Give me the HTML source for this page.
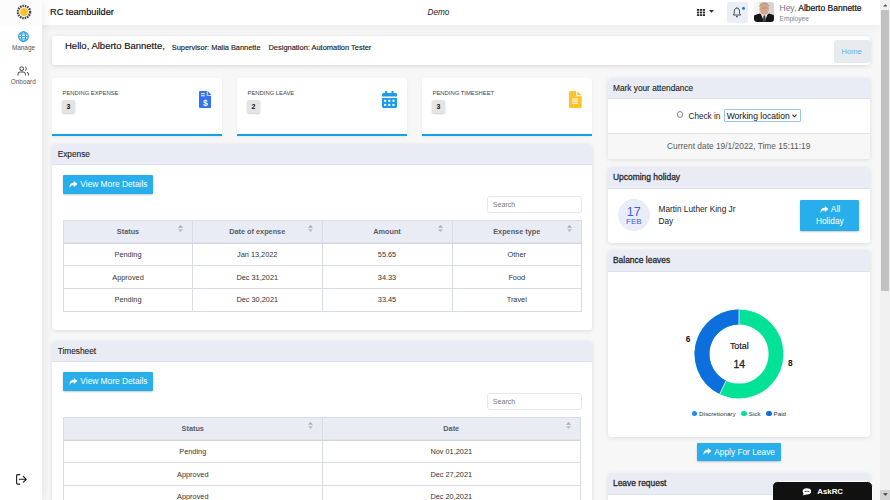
<!DOCTYPE html>
<html>
<head>
<meta charset="utf-8">
<title>RC teambuilder</title>
<style>
*{box-sizing:border-box;margin:0;padding:0}
html,body{width:890px;height:500px;overflow:hidden;background:#f7f7f8;font-family:"Liberation Sans",sans-serif;color:#212529}
.abs{position:absolute}
#app{position:relative;width:890px;height:500px;overflow:hidden;background:#f7f7f8}
.t{position:absolute;white-space:nowrap;line-height:1}
#topbar{left:0;top:0;width:880px;height:24.5px;background:#fff;box-shadow:0 2px 9px rgba(0,0,0,.055)}
#sidebar{left:0;top:0;width:42px;height:500px;background:#fff;box-shadow:2px 0 9px rgba(0,0,0,.07)}
.card{position:absolute;background:#fff;border-radius:3px;box-shadow:0 1px 4px rgba(0,0,0,.11)}
.hdr{position:absolute;left:0;top:0;right:0;height:21.3px;background:#e9ecf5;border-radius:3px 3px 0 0;border-bottom:1px solid #dfe2ec}
.hdr span{position:absolute;left:5.3px;top:4.9px;font-size:8.3px;line-height:10px;color:#222;-webkit-text-stroke:.12px #222}
.hdr.b{height:21.7px}
.hdr span.b{font-size:8.45px;top:5px;-webkit-text-stroke:.27px #26262a;color:#26262a}
.btn{position:absolute;background:#28aeea;color:#fff;border-radius:1px;box-shadow:0 1px 2px rgba(0,0,0,.22);font-size:8.35px;text-align:center;white-space:nowrap}
.btn svg{vertical-align:-0.8px;margin-right:1px}
.stat{position:absolute;top:78px;width:170px;height:58px;background:#fff;border-radius:3px 3px 0 0;border-bottom:2px solid #14a1e8;box-shadow:0 1px 3px rgba(0,0,0,.07)}
.stat .lab{position:absolute;left:10.2px;top:11.8px;font-size:5.85px;line-height:7px;color:#444;white-space:nowrap}
.stat .num{position:absolute;left:9.8px;top:22.3px;width:12.5px;height:13px;background:#e4e4e6;border-radius:2px;font-size:7px;font-weight:bold;line-height:13px;text-align:center;color:#111;box-shadow:0 1px 2px rgba(0,0,0,.2)}
table{position:absolute;border-collapse:collapse;table-layout:fixed;font-size:7.35px;color:#333}
td,th{border:1px solid #d9dce7;text-align:center;vertical-align:middle;height:22.7px;padding:0;font-weight:normal;position:relative}
th{background:#e9ecf5;font-weight:bold;color:#595b66;font-size:7.3px;padding:0 0 .6px 0;border-bottom-color:#d0d4de;box-shadow:inset 0 -1px 0 #e1e4ec}
.sort{position:absolute;right:9px;top:3.9px;width:5px;height:7px}
.search{position:absolute;width:94.5px;height:16.5px;border:1px solid #e7e7e9;border-radius:3px;background:#fff;font-size:7.1px;color:#777;line-height:17px;padding-left:4.6px;overflow:hidden}
</style>
</head>
<body>
<div id="app">

<!-- TOP BAR / SIDEBAR -->
<div id="topbar" class="abs"></div>
<div id="sidebar" class="abs"></div>
<div class="abs" style="left:0;top:0;width:42px;height:24.5px;background:#fcfcfc"></div>

<!-- logo -->
<svg class="abs" style="left:15.6px;top:4.2px" width="16" height="16" viewBox="0 0 16 16">
 <circle cx="8" cy="8" r="6.1" fill="none" stroke="#444" stroke-width="2.4" stroke-dasharray="1.5 0.9"/>
 <circle cx="8" cy="8" r="3.9" fill="#fcc02c"/>
</svg>
<div class="t" style="left:50px;top:7.7px;font-size:9.2px;color:#111;-webkit-text-stroke:.2px #111">RC teambuilder</div>
<div class="t" style="left:427.5px;top:8.6px;font-size:8.2px;font-style:italic;color:#222">Demo</div>

<!-- grid icon -->
<svg class="abs" style="left:696.7px;top:9px" width="8" height="7" viewBox="0 0 8 7" fill="#2b2b2b">
 <rect x="0" y="0" width="2.2" height="1.8"/><rect x="2.9" y="0" width="2.2" height="1.8"/><rect x="5.8" y="0" width="2.2" height="1.8"/>
 <rect x="0" y="2.6" width="2.2" height="1.8"/><rect x="2.9" y="2.6" width="2.2" height="1.8"/><rect x="5.8" y="2.6" width="2.2" height="1.8"/>
 <rect x="0" y="5.2" width="2.2" height="1.8"/><rect x="2.9" y="5.2" width="2.2" height="1.8"/><rect x="5.8" y="5.2" width="2.2" height="1.8"/>
</svg>
<svg class="abs" style="left:709px;top:10.3px" width="5" height="3" viewBox="0 0 5 3"><path d="M0 0h5L2.500 2.800z" fill="#2b2b2b"/></svg>
<!-- bell -->
<div class="abs" style="left:727.1px;top:2px;width:20.6px;height:20.6px;background:#ebeef9;border-radius:2px"></div>
<svg class="abs" style="left:731px;top:6px" width="14" height="13" viewBox="0 0 14 13">
 <path d="M5.900 2.100c-1.700 0-2.600 1.300-2.600 3v2.300L2.200 9h7.400L8.500 7.400V5.100c0-1.700-.9-3-2.600-3z" fill="none" stroke="#3a3a3a" stroke-width=".9" stroke-linejoin="round"/>
 <path d="M5.900 1.300v.8M5 10.300h1.800" stroke="#3a3a3a" stroke-width=".9" fill="none"/>
 <path d="M5 10.400a.9.900 0 0 0 1.800 0z" fill="#3a3a3a"/>
 <circle cx="12.500" cy="2.400" r="1.400" fill="#1a6bf0"/>
</svg>
<!-- avatar -->
<svg class="abs" style="left:753.8px;top:2px;border-radius:3px" width="20.500" height="20" viewBox="0 0 20.500 20">
 <defs><filter id="bl" x="-20%" y="-20%" width="140%" height="140%"><feGaussianBlur stdDeviation=".55"/></filter>
 <clipPath id="cp"><rect width="20.500" height="20" rx="2.500"/></clipPath></defs>
 <g clip-path="url(#cp)"><rect width="20.500" height="20" fill="#e4e3e1"/>
 <g filter="url(#bl)">
  <rect x="-1" y="-1" width="6" height="14" fill="#f4f4f4"/>
  <rect x="15" y="-1" width="7" height="14" fill="#d6d5d3"/>
  <ellipse cx="10.300" cy="7.200" rx="4.600" ry="5.600" fill="#d7a58c"/>
  <path d="M5.300 5.500C5.300 1.500 8 .2 10.400.2c2.600 0 5 1.400 5 5.300-1.200-2-2.400-2.500-5-2.500s-3.900.6-5.100 2.500z" fill="#b3a48c"/>
  <path d="M-1 21V15.500c0-2 3-3 6.500-4L10.300 14l4.700-2.500c3.500 1 6.500 2 6.500 4V21z" fill="#19191b"/>
  <path d="M6.800 11.800l3.500 8.500 3.500-8.500-3.500 1.500z" fill="#ececee"/>
  <path d="M9.500 13.500h1.700l.8 7h-3.300z" fill="#3c3c40"/>
  <ellipse cx="10.300" cy="6" rx="3.300" ry="1" fill="#c08e78" opacity=".6"/>
 </g></g>
</svg>
<div class="t" style="left:779.5px;top:4px;font-size:8.5px;color:#74748f">Hey, <span style="color:#111;-webkit-text-stroke:.22px #111">Alberto Bannette</span></div>
<div class="t" style="left:779.5px;top:15.500px;font-size:6.6px;color:#7e7e98">Employee</div>

<!-- SIDEBAR ITEMS -->
<svg class="abs" style="left:18.100px;top:31px" width="11" height="11" viewBox="0 0 11 11" fill="none" stroke="#1ea3ee" stroke-width="1.150">
 <circle cx="5.500" cy="5.500" r="4.800"/><ellipse cx="5.500" cy="5.500" rx="2" ry="4.800"/><path d="M.7 5.500h9.600M1.500 3h8M1.500 8h8" stroke-width=".9"/>
</svg>
<div class="t" style="left:0;top:45.200px;width:47px;text-align:center;font-size:6.400px;color:#555">Manage</div>
<svg class="abs" style="left:17px;top:65.900px" width="12.500" height="10" viewBox="0 0 12.500 10" fill="none" stroke="#3a3a3a" stroke-width=".950">
 <circle cx="4.700" cy="2.700" r="1.900"/><path d="M1 9.500V8.200A2.200 2.200 0 0 1 3.200 6h3a2.200 2.200 0 0 1 2.200 2.200v1.300"/>
 <path d="M8.200 1a1.900 1.900 0 0 1 0 3.500M10 6.200a2.200 2.200 0 0 1 1.500 2v1.300"/>
</svg>
<div class="t" style="left:0;top:79.200px;width:46.500px;text-align:center;font-size:6.400px;color:#555">Onboard</div>
<svg class="abs" style="left:15px;top:473px" width="13" height="13" viewBox="0 0 13 13" fill="none" stroke="#1a1a1a" stroke-width="1.1" stroke-linecap="round" stroke-linejoin="round">
 <path d="M4.800 1.600H2.600a1 1 0 0 0-1 1v7.500a1 1 0 0 0 1 1h2.200"/><path d="M4.300 6.300h6.800M8.300 3.400l3 2.900-3 2.900"/>
</svg>

<!-- BREADCRUMB CARD -->
<div class="card" style="left:52.400px;top:36.200px;width:817.600px;height:28.800px;box-shadow:0 1px 5px rgba(0,0,0,.13)"></div>
<div class="t" style="left:65px;top:40.600px;font-size:9.500px;color:#111;-webkit-text-stroke:.15px #111">Hello, Alberto Bannette,</div>
<div class="t" style="left:171.800px;top:43.600px;font-size:7.400px;color:#222;-webkit-text-stroke:.15px #222">Supervisor: Malia Bannette</div>
<div class="t" style="left:268.500px;top:43.600px;font-size:7.450px;color:#222;-webkit-text-stroke:.15px #222">Designation: Automation Tester</div>
<div class="abs" style="left:833.600px;top:39.900px;width:36.200px;height:22.900px;background:#e8ebee;border-radius:2.500px"></div>
<div class="t" style="left:833.600px;top:47.900px;width:36.200px;text-align:center;font-size:7.600px;color:#55b2ee">Home</div>

<!-- STAT CARDS -->
<div class="stat" style="left:52.400px;width:169.800px"><div class="lab">PENDING EXPENSE</div><div class="num">3</div>
 <svg class="abs" style="left:146.600px;top:13px" width="12.500" height="17" viewBox="0 0 12.500 17"><path d="M0 1.200A1.200 1.200 0 0 1 1.200 0H7.800v4.700h4.700v11.100a1.200 1.200 0 0 1-1.200 1.200H1.200A1.200 1.200 0 0 1 0 15.800z" fill="#3370f4"/><path d="M8.600 0l3.900 3.900H8.600z" fill="#3370f4"/><text x="6.300" y="14.800" font-size="8.500" font-weight="bold" text-anchor="middle" fill="#fff" font-family="Liberation Sans">$</text><rect x="2" y="2.200" width="3.800" height="1" fill="#fff"/><rect x="2" y="4.300" width="3.800" height="1" fill="#fff"/></svg>
</div>
<div class="stat" style="left:237.400px;width:169.800px"><div class="lab">PENDING LEAVE</div><div class="num">2</div>
 <svg class="abs" style="left:144.600px;top:13px" width="15" height="17" viewBox="0 0 15 17"><path d="M0 3.500A1.500 1.500 0 0 1 1.500 2H3V.6a.6.600 0 0 1 .6-.6h1a.6.600 0 0 1 .6.600V2h4.200V.6a.6.600 0 0 1 .6-.6h1a.6.600 0 0 1 .6.600V2h1.500A1.500 1.500 0 0 1 15 3.500V5.600H0z" fill="#1c9bee"/><path d="M0 7h15v8.500a1.400 1.400 0 0 1-1.400 1.400H1.400A1.400 1.400 0 0 1 0 15.500z" fill="#1c9bee"/><g fill="#fff"><rect x="2.100" y="8.800" width="2.100" height="2"/><rect x="6.200" y="8.800" width="2.100" height="2"/><rect x="10.400" y="8.800" width="2.100" height="2"/><rect x="2.100" y="12.900" width="2.100" height="2"/><rect x="6.200" y="12.900" width="2.100" height="2"/><rect x="10.400" y="12.900" width="2.100" height="2"/></g></svg>
</div>
<div class="stat" style="left:422.400px;width:169.800px"><div class="lab">PENDING TIMESHEET</div><div class="num">3</div>
 <svg class="abs" style="left:146.800px;top:13px" width="13" height="17" viewBox="0 0 13 17"><path d="M0 1.200A1.200 1.200 0 0 1 1.200 0H7.200v5.200H12.700v10.600a1.200 1.200 0 0 1-1.200 1.200H1.200A1.200 1.200 0 0 1 0 15.800z" fill="#fbc42f"/><path d="M8.300 .2L12.700 4.300H8.300z" fill="#fbc42f"/><g fill="#fff"><rect x="3" y="7.500" width="6" height="1"/><rect x="3" y="9.600" width="6" height="1"/><rect x="3" y="11.700" width="6" height="1"/></g></svg>
</div>

<!-- EXPENSE PANEL -->
<div class="card" style="left:52.400px;top:144.300px;width:539.800px;height:186px"><div class="hdr" style="height:20.5px"><span style="top:4.6px">Expense</span></div></div>
<div class="btn" style="left:63px;top:175px;width:90px;height:19px;line-height:18.600px"><svg width="8.500" height="7" viewBox="0 0 8.500 7"><path d="M4.800 0L8.500 3 4.800 6V4.200C2.600 4.200 1.500 4.900.6 6.900.3 3.600 1.800 1.900 4.800 1.800z" fill="#fff"/></svg> View More Details</div>
<div class="search" style="left:487.200px;top:196.100px">Search</div>
<table style="left:63px;top:220px;width:518px">
<colgroup><col style="width:129px"><col style="width:129.5px"><col style="width:130px"><col style="width:129.5px"></colgroup>
<tr><th>Status<svg class="sort" viewBox="0 0 5 7"><path d="M2.500 0L5 2.800H0z" fill="#a9abb3"/><path d="M2.500 7L5 4.200H0z" fill="#b9bbc3"/></svg></th><th>Date of expense<svg class="sort" viewBox="0 0 5 7"><path d="M2.500 0L5 2.800H0z" fill="#a9abb3"/><path d="M2.500 7L5 4.200H0z" fill="#b9bbc3"/></svg></th><th>Amount<svg class="sort" viewBox="0 0 5 7"><path d="M2.500 0L5 2.800H0z" fill="#a9abb3"/><path d="M2.500 7L5 4.200H0z" fill="#b9bbc3"/></svg></th><th>Expense type<svg class="sort" viewBox="0 0 5 7"><path d="M2.500 0L5 2.800H0z" fill="#a9abb3"/><path d="M2.500 7L5 4.200H0z" fill="#b9bbc3"/></svg></th></tr>
<tr><td>Pending</td><td>Jan 13,2022</td><td>55.65</td><td>Other</td></tr>
<tr><td>Approved</td><td>Dec 31,2021</td><td>34.33</td><td>Food</td></tr>
<tr><td>Pending</td><td>Dec 30,2021</td><td>33.45</td><td>Travel</td></tr>
</table>

<!-- TIMESHEET PANEL -->
<div class="card" style="left:52.400px;top:341.300px;width:539.800px;height:180px"><div class="hdr" style="height:20.5px"><span style="top:4.6px">Timesheet</span></div></div>
<div class="btn" style="left:63px;top:372px;width:90px;height:19px;line-height:18.600px"><svg width="8.500" height="7" viewBox="0 0 8.500 7"><path d="M4.800 0L8.500 3 4.800 6V4.200C2.600 4.200 1.500 4.900.6 6.900.3 3.600 1.800 1.900 4.800 1.800z" fill="#fff"/></svg> View More Details</div>
<div class="search" style="left:487.200px;top:393.100px">Search</div>
<table style="left:63px;top:417px;width:518px">
<colgroup><col><col></colgroup>
<tr><th>Status<svg class="sort" viewBox="0 0 5 7"><path d="M2.500 0L5 2.800H0z" fill="#a9abb3"/><path d="M2.500 7L5 4.200H0z" fill="#b9bbc3"/></svg></th><th>Date<svg class="sort" viewBox="0 0 5 7"><path d="M2.500 0L5 2.800H0z" fill="#a9abb3"/><path d="M2.500 7L5 4.200H0z" fill="#b9bbc3"/></svg></th></tr>
<tr><td>Pending</td><td>Nov 01,2021</td></tr>
<tr><td>Approved</td><td>Dec 27,2021</td></tr>
<tr><td>Approved</td><td>Dec 20,2021</td></tr>
</table>

<!-- attendance -->
<div class="card" style="left:607.700px;top:77.700px;width:262px;height:81.100px"><div class="hdr"><span>Mark your attendance</span></div>
 <div class="abs" style="left:0;top:55.300px;width:262px;height:25.800px;background:#f7f7f8;border-top:1px solid #e3e3e5;border-radius:0 0 3px 3px"></div>
</div>
<div class="abs" style="left:676.600px;top:111px;width:6.500px;height:6.500px;border:.9px solid #8a8a8a;border-radius:50%;background:#fff"></div>
<div class="t" style="left:688.500px;top:113.200px;font-size:8.200px;color:#222">Check in</div>
<div class="abs" style="left:724.200px;top:109.400px;width:77px;height:12.200px;border:1px solid #98c6e8;border-radius:1px;background:#fff"></div>
<div class="t" style="left:726.700px;top:111.600px;font-size:8.550px;color:#111">Working location</div>
<svg class="abs" style="left:791.700px;top:114.300px" width="5" height="4" viewBox="0 0 5 4"><path d="M.5.700L2.500 2.800 4.500.7" fill="none" stroke="#222" stroke-width="1.100"/></svg>
<div class="t" style="left:607.700px;top:142.300px;width:262px;text-align:center;font-size:8.400px;color:#5a5a5a">Current date 19/1/2022, Time 15:11:19</div>

<!-- holiday -->
<div class="card" style="left:607.700px;top:167px;width:262px;height:75.500px"><div class="hdr b"><span class="b">Upcoming holiday</span></div></div>
<div class="abs" style="left:617.800px;top:199.200px;width:32px;height:32px;border-radius:50%;background:#e9ecf9"></div>
<div class="t" style="left:617.800px;top:205.700px;width:32px;text-align:center;font-size:12.500px;color:#3f5fdc">17</div>
<div class="t" style="left:617.800px;top:217.600px;width:32px;text-align:center;font-size:7.900px;color:#3f5fdc">FEB</div>
<div class="t" style="left:658.500px;top:204.700px;font-size:8.300px;color:#222">Martin Luther King Jr</div>
<div class="t" style="left:658.500px;top:217px;font-size:8.300px;color:#222">Day</div>
<div class="btn" style="left:800.300px;top:199.700px;width:59.100px;height:31.100px;line-height:12.300px;padding-top:3.400px"><svg width="8.500" height="7" viewBox="0 0 8.500 7"><path d="M4.800 0L8.500 3 4.800 6V4.200C2.600 4.200 1.500 4.900.6 6.900.3 3.600 1.800 1.900 4.800 1.800z" fill="#fff"/></svg> All<br>Holiday</div>

<!-- balance leaves -->
<div class="card" style="left:607.700px;top:250.300px;width:262px;height:186.500px"><div class="hdr b"><span class="b">Balance leaves</span></div></div>
<svg class="abs" style="left:679.300px;top:303.500px" width="120" height="100" viewBox="0 0 120 100">
 <g transform="translate(60,50)">
  <circle r="37" fill="none" stroke="#00e396" stroke-width="14.800"/>
  <circle r="37" fill="none" stroke="#0d6ede" stroke-width="14.800" stroke-dasharray="99.630 232.480" transform="rotate(115.700)"/>
  <path d="M0 -44.600V-29.400" stroke="#fff" stroke-width=".8"/>
  <path d="M-12.740 26.490L-19.330 40.190" stroke="#fff" stroke-width=".8"/>
 </g>
</svg>
<div class="t" style="left:709.300px;top:342.400px;width:60px;text-align:center;font-size:8.900px;color:#222;-webkit-text-stroke:.2px #222">Total</div>
<div class="t" style="left:709.300px;top:360.400px;width:60px;text-align:center;font-size:10.400px;color:#222;-webkit-text-stroke:.3px #222">14</div>
<div class="t" style="left:685.800px;top:335px;font-size:8.300px;font-weight:bold;color:#111">6</div>
<div class="t" style="left:788.100px;top:358.900px;font-size:8.300px;font-weight:bold;color:#111">8</div>
<div class="abs" style="left:691.500px;top:410.700px;width:5.800px;height:5.800px;border-radius:50%;background:#1a8cff"></div>
<div class="t" style="left:699.100px;top:410.600px;font-size:6.250px;color:#333">Discretionary</div>
<div class="abs" style="left:741.200px;top:410.700px;width:5.800px;height:5.800px;border-radius:50%;background:#00e396"></div>
<div class="t" style="left:748.800px;top:410.600px;font-size:6.250px;color:#333">Sick</div>
<div class="abs" style="left:765.900px;top:410.700px;width:5.800px;height:5.800px;border-radius:50%;background:#0d6ede"></div>
<div class="t" style="left:773.500px;top:410.600px;font-size:6.250px;color:#333">Paid</div>

<div class="btn" style="left:697px;top:442.600px;width:83.800px;height:18.300px;line-height:19.200px"><svg width="8.500" height="7" viewBox="0 0 8.500 7"><path d="M4.800 0L8.500 3 4.800 6V4.200C2.600 4.200 1.500 4.900.6 6.900.3 3.600 1.800 1.900 4.800 1.800z" fill="#fff"/></svg> Apply For Leave</div>

<!-- leave request -->
<div class="card" style="left:607.700px;top:473.400px;width:262px;height:60px"><div class="hdr b"><span class="b">Leave request</span></div></div>

<!-- AskRC -->
<div class="abs" style="left:772px;top:481px;width:101px;height:23px;background:#111;border-radius:5.5px 5.5px 0 0;border:1px solid #fbfbfd"></div>
<svg class="abs" style="left:801.900px;top:487.800px" width="9.500" height="7.900" viewBox="0 0 9.500 7.500"><ellipse cx="5" cy="3.200" rx="4.300" ry="3.100" fill="#fff"/><path d="M2.200 4.600L.6 7.300 4.400 6z" fill="#fff"/><circle cx="3.200" cy="3.200" r=".55" fill="#111"/><circle cx="5" cy="3.200" r=".55" fill="#111"/><circle cx="6.800" cy="3.200" r=".55" fill="#111"/></svg>
<div class="t" style="left:817.300px;top:487.900px;font-size:7.850px;font-weight:bold;color:#fff">AskRC</div>

<!-- SCROLLBAR -->
<div class="abs" style="left:880.100px;top:0;width:9.900px;height:500px;background:#f1f1f1"></div>
<div class="abs" style="left:881px;top:9.900px;width:7.800px;height:280.800px;background:#c1c1c1"></div>
<svg class="abs" style="left:882.900px;top:4.100px" width="4.600" height="2.600" viewBox="0 0 6 3"><path d="M3 0L6 3H0z" fill="#505050"/></svg>
<div class="abs" style="left:880px;top:490px;width:10px;height:10px;background:#d2d2d2"></div>
<svg class="abs" style="left:882.800px;top:493px" width="4.800" height="3" viewBox="0 0 6 3"><path d="M3 3L6 0H0z" fill="#3a3a3a"/></svg>

</div>
</body>
</html>
